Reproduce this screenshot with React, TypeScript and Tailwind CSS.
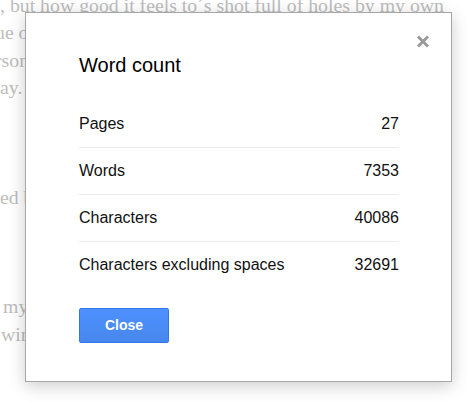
import { type ReactNode } from "react";

const rows: { label: string; value: string }[] = [
  { label: "Pages", value: "27" },
  { label: "Words", value: "7353" },
  { label: "Characters", value: "40086" },
  { label: "Characters excluding spaces", value: "32691" },
];

// page text behind the dialog, one entry per line ("" = blank line)
const docLines: ReactNode[] = [
  ", but how good it feels to´s shot full of holes by my own",
  <span className="-ml-[5px]">ue of</span>,
  <span className="-ml-[5px]">rson</span>,
  "ay.",
  "",
  "",
  "",
  "ed by",
  "",
  "",
  "",
  <span className="ml-[3px]">my</span>,
  <span className="ml-[1px]">win</span>,
];

function DocText() {
  return (
    <div className="mt-[-8px] overflow-hidden whitespace-nowrap font-['Liberation_Serif',serif] text-[19.8px] leading-[27.4px] text-[#bdbdbd]">
      {docLines.map((line, i) => (
        <div key={i} className="h-[27.4px]">
          {line}
        </div>
      ))}
    </div>
  );
}

function WordCountDialog() {
  return (
    <div className="absolute left-[25px] top-[12px] flex h-[370px] w-[427px] flex-col border border-black/35 bg-white pl-[53px] pr-[52px] pt-[41px] font-['Liberation_Sans',Arial,sans-serif] shadow-[0_4px_16px_rgba(0,0,0,0.2)]">
      <button className="absolute right-[21px] top-[22px] text-[#9a9a9a]" aria-label="Close">
        <svg width="14" height="13" viewBox="0 0 14 13">
          <path
            d="M2 1.5 L12 11.5 M12 1.5 L2 11.5"
            stroke="currentColor"
            strokeWidth="3"
          />
        </svg>
      </button>

      <div className="mb-[24px] text-[20px] leading-[23px] text-black">
        Word count
      </div>

      <div className="flex flex-col">
        {rows.map((row, i) => (
          <div
            key={row.label}
            className={`flex h-[46px] items-center justify-between text-[16px] leading-[18px] text-[#111] ${
              i < rows.length - 1 ? "box-content border-b border-[#ebebeb]" : ""
            }`}
          >
            <span>{row.label}</span>
            <span>{row.value}</span>
          </div>
        ))}
      </div>

      <button className="mt-[20px] h-[35px] w-[90px] rounded-[2px] border border-[#3079ed] bg-gradient-to-b from-[#4d90fe] to-[#4787ed] text-[14px] font-bold text-white">
        Close
      </button>
    </div>
  );
}

export default function App() {
  return (
    <div className="relative h-[402px] w-[471px] overflow-hidden bg-white">
      <DocText />
      <WordCountDialog />
    </div>
  );
}
